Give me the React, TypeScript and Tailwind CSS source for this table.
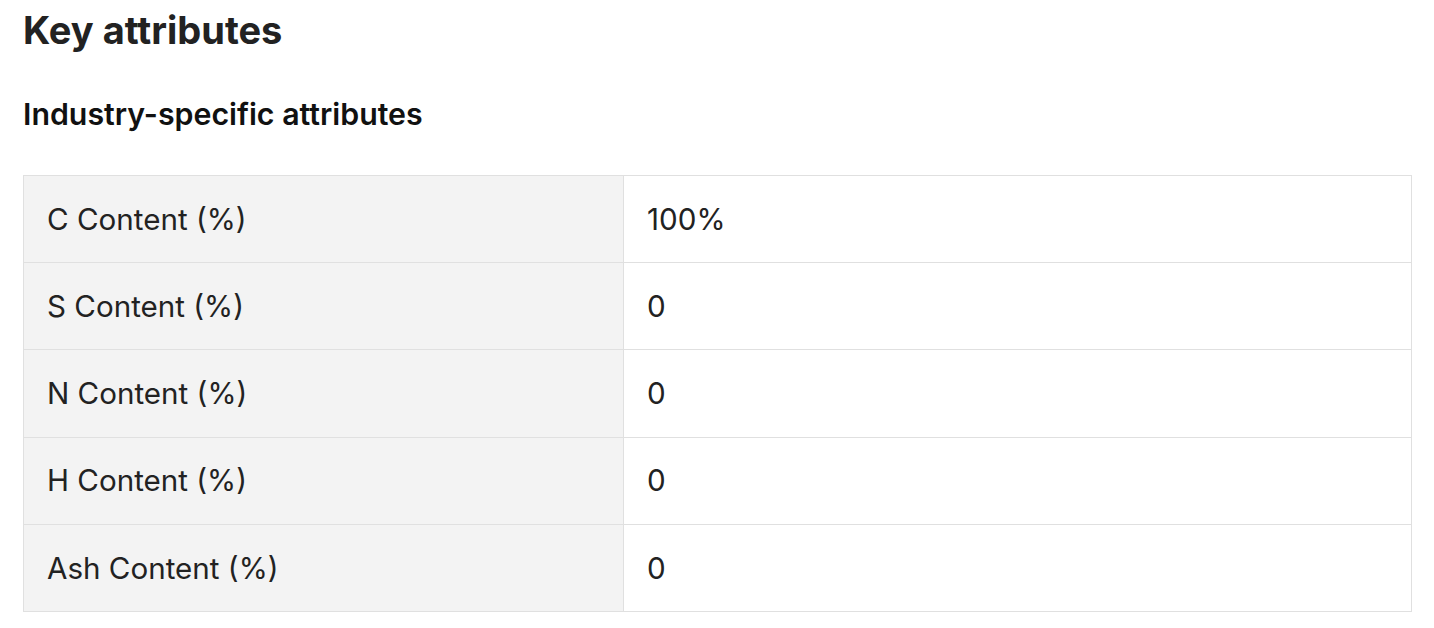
const rows = [
  { label: "C Content (%)", value: "100%" },
  { label: "S Content (%)", value: "0" },
  { label: "N Content (%)", value: "0" },
  { label: "H Content (%)", value: "0" },
  { label: "Ash Content (%)", value: "0" },
];

export default function App() {
  return (
    <div className="min-h-screen bg-white px-[23px] pt-[6px] font-['Inter',sans-serif] text-[#222]">
      <h1 className="text-[38px] font-bold leading-[48px]">Key attributes</h1>
      <h2 className="mt-[42px] text-[30.3px] font-semibold leading-[36px] text-[#111]">
        Industry-specific attributes
      </h2>
      <table className="mt-[43px] w-[1389px] border-collapse border border-[#e0e0e0]">
        <tbody>
          {rows.map((row) => (
            <tr key={row.label} className="h-[87.2px]">
              <td className="w-[600px] border border-[#e0e0e0] bg-[#f3f3f3] px-[23px] text-[29.6px]">
                {row.label}
              </td>
              <td className="border border-[#e0e0e0] px-[23px] text-[29.6px]">{row.value}</td>
            </tr>
          ))}
        </tbody>
      </table>
    </div>
  );
}
